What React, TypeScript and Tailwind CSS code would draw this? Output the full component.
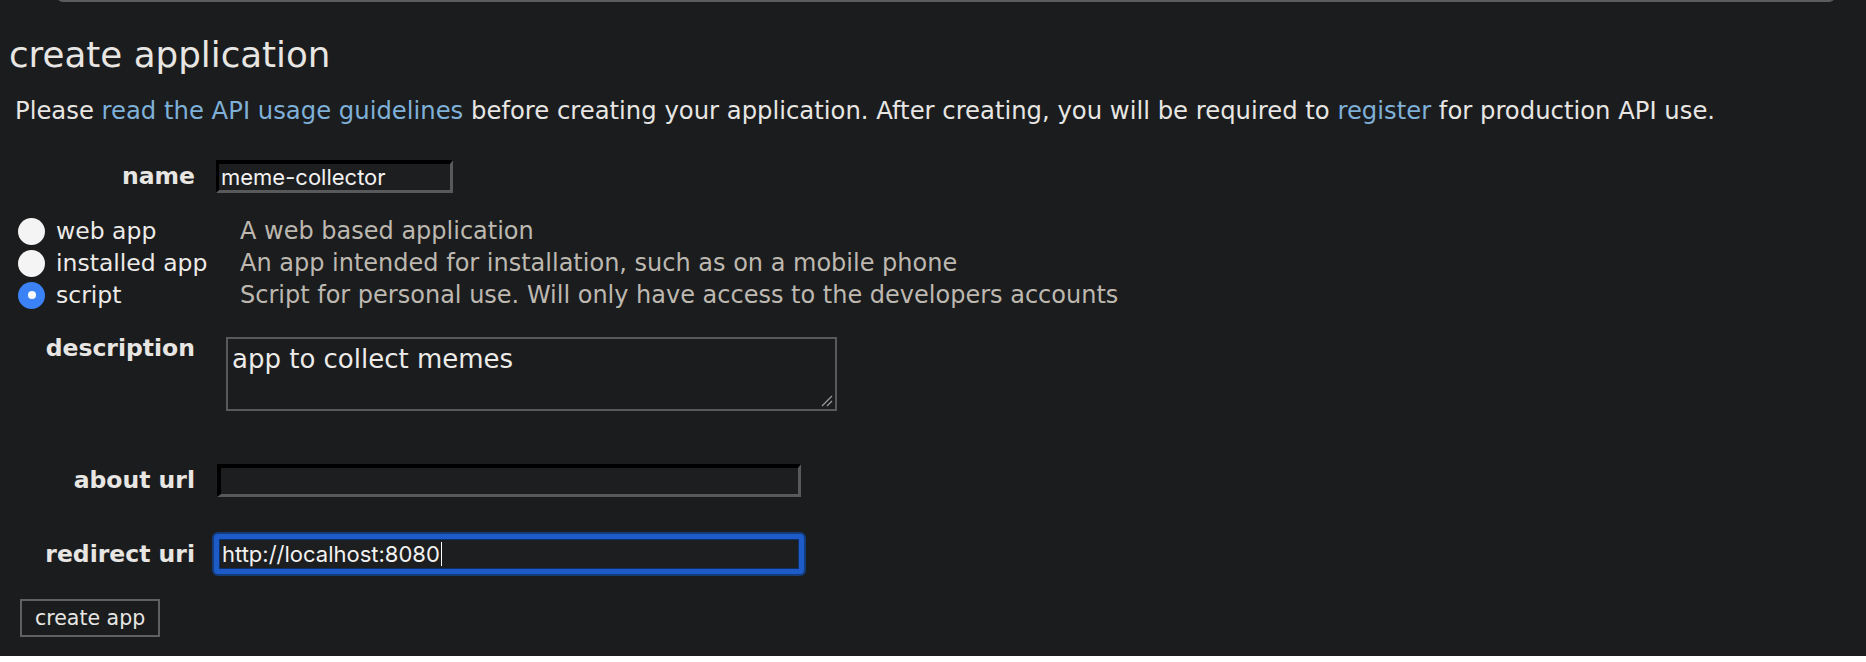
import React from "react";

const labelCls =
  "w-[195px] shrink-0 text-right font-bold text-[23.5px] text-[#e8e6e3]";

function Radio({ checked }: { checked?: boolean }) {
  if (checked) {
    return (
      <span className="w-[27px] h-[27px] rounded-full bg-[#3b82f6] flex items-center justify-center shrink-0">
        <span className="w-[8px] h-[8px] rounded-full bg-white" />
      </span>
    );
  }
  return <span className="w-[27px] h-[27px] rounded-full bg-[#f4f4f4] shrink-0" />;
}

const appTypes = [
  { label: "web app", desc: "A web based application" },
  { label: "installed app", desc: "An app intended for installation, such as on a mobile phone" },
  { label: "script", desc: "Script for personal use. Will only have access to the developers accounts", checked: true },
];

export default function App() {
  return (
    <div className="min-h-screen w-full bg-[#1b1c1e] text-[#e8e6e3] font-['DejaVu_Sans',Verdana,sans-serif]">
      {/* bottom edge of the box above */}
      <div className="ml-[57px] w-[1778px] h-[8px] -mt-[6px] border-2 border-t-0 border-[#5b5c5e] rounded-b-[6px]" />

      <h1 className="mt-[33px] pl-[9px] text-[35.7px] leading-[40px] font-normal">create application</h1>

      <p className="mt-[21px] pl-[15px] text-[24.3px] leading-[30px]">
        Please <a className="text-[#7fb0d8]">read the API usage guidelines</a> before creating your application.
        After creating, you will be required to <a className="text-[#7fb0d8]">register</a> for production API use.
      </p>

      <div className="mt-[34px] flex items-start h-[33px]">
        <div className={`${labelCls} leading-[33px]`}>name</div>
        <input
          readOnly
          value="meme-collector"
          className="ml-[21px] w-[237px] h-[33px] bg-[#1d1e20] border-[4px] border-t-black border-l-black border-b-[#58595b] border-r-[#58595b] border-l-[3px] border-b-[3px] border-r-[3px] px-[2px] text-[22px] leading-[26px] text-[#f2f2f2] font-['Inter',sans-serif] outline-none"
        />
      </div>

      <div className="mt-[22px] flex flex-col">
        {appTypes.map((t) => (
          <div key={t.label} className="h-[32px] flex items-center leading-[32px]">
            <div className="w-[240px] shrink-0 flex items-center pl-[18px]">
              <Radio checked={t.checked} />
              <span className="ml-[11px] text-[23.5px] text-[#ecebe8]">{t.label}</span>
            </div>
            <span className="text-[24px] text-[#bdb8b0]">{t.desc}</span>
          </div>
        ))}
      </div>

      <div className="mt-[26px] flex items-start">
        <div className={`${labelCls} leading-[20px] pt-[1px]`}>description</div>
        <div className="relative ml-[31px] w-[611px] h-[74px] border-2 border-[#58595b] bg-[#1b1c1e]">
          <div className="px-[4px] pt-[5px] text-[26px] leading-[30px] text-[#ecebe8]">app to collect memes</div>
          <svg className="absolute right-[2px] bottom-[2px]" width="13" height="13" viewBox="0 0 13 13">
            <line x1="2" y1="12" x2="12" y2="2" stroke="#9a9a9a" strokeWidth="1.3" />
            <line x1="7" y1="12" x2="12" y2="7" stroke="#9a9a9a" strokeWidth="1.3" />
          </svg>
        </div>
      </div>

      <div className="mt-[53px] flex items-start h-[33px]">
        <div className={`${labelCls} leading-[33px]`}>about url</div>
        <input
          readOnly
          value=""
          className="ml-[22px] w-[584px] h-[33px] bg-[#1d1e20] border-[4px] border-t-black border-l-black border-b-[#58595b] border-r-[#58595b] border-b-[3px] border-r-[3px] outline-none"
        />
      </div>

      <div className="mt-[37px] flex items-start h-[40px]">
        <div className={`${labelCls} leading-[40px]`}>redirect uri</div>
        <div className="ml-[19px] w-[590px] h-[40px] rounded-[4px] border-[5px] border-[#1d5cc8] shadow-[0_0_0_2px_#123c7a,inset_0_0_0_1px_#0d2f6c] bg-[#1d1e20] flex items-center px-[3px]">
          <span className="text-[22px] leading-[30px] text-[#f2f2f2] font-['Inter',sans-serif]">http://localhost:8080</span>
          <span className="w-[1.5px] h-[24px] bg-white ml-[1px]" />
        </div>
      </div>

      <button className="mt-[25px] ml-[20px] h-[38px] px-[13px] border-2 border-[#5f6062] bg-transparent text-[20.5px] leading-[30px] text-[#e8e6e3]">
        create app
      </button>
    </div>
  );
}
